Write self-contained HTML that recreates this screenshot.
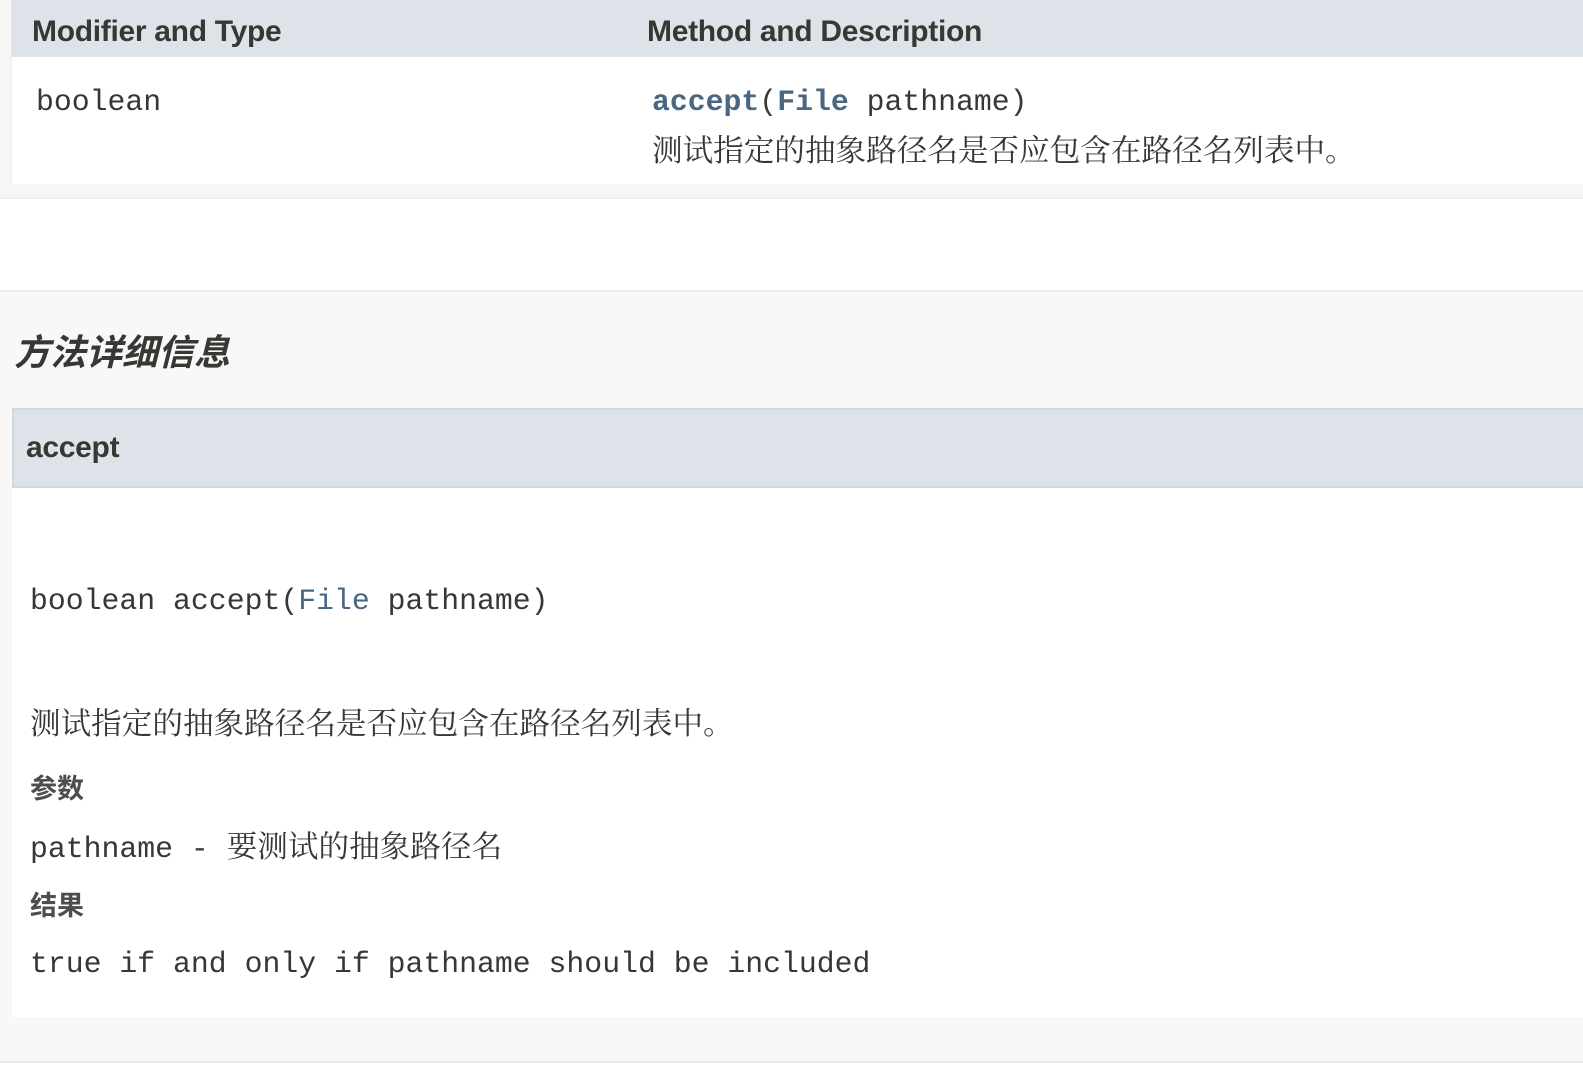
<!DOCTYPE html>
<html><head><meta charset="utf-8"><style>
html,body{margin:0;padding:0;width:1583px;height:1078px;overflow:hidden;background:#fff;}
.a{position:absolute;white-space:nowrap;}
.mono{font-family:"Liberation Mono","Noto Serif CJK SC",monospace;font-size:29.8px;color:#353833;}
.cjk{font-family:"Liberation Serif","Noto Serif CJK SC",serif;font-size:30.6px;color:#353833;}
.sans{font-family:"Liberation Sans","Noto Sans CJK SC",sans-serif;font-weight:bold;color:#353833;}
</style></head><body>
<div class="a" style="left:0;top:0;width:1583px;height:197px;background:#f6f6f6"></div>
<div class="a" style="left:11px;top:0;width:1572px;height:184px;background:#fff;border-left:1px solid #eee"></div>
<div class="a" style="left:11px;top:0;width:1572px;height:57px;background:#dee3e9"></div>
<div class="a" style="left:0;top:197px;width:1583px;height:2px;background:#eee"></div>
<div class="a sans" style="left:32px;top:15px;font-size:30px;letter-spacing:-0.3px">Modifier and Type</div>
<div class="a sans" style="left:647px;top:15px;font-size:30px;letter-spacing:-0.3px">Method and Description</div>
<div class="a mono" style="left:36px;top:85px">boolean</div>
<div class="a mono" style="left:652px;top:85px"><b style="color:#4a6782">accept</b>(<b style="color:#4a6782">File</b> pathname)</div>
<div class="a cjk" style="left:652px;top:126px">测试指定的抽象路径名是否应包含在路径名列表中。</div>
<div class="a" style="left:0;top:290px;width:1583px;height:2px;background:#ececec"></div>
<div class="a" style="left:0;top:292px;width:1583px;height:769px;background:#f8f8f8"></div>
<div class="a" style="left:0;top:1061px;width:1583px;height:2px;background:#ececec"></div>
<div class="a sans" style="left:14px;top:324px;font-size:36px;font-style:italic;">方法详细信息</div>
<div class="a" style="left:12px;top:408px;width:1571px;height:80px;background:#dee3e9;border-top:2px solid #d0d9e0;border-bottom:2px solid #d0d9e0;border-left:2px solid #d0d9e0;box-sizing:border-box"></div>
<div class="a" style="left:12px;top:488px;width:1571px;height:529px;background:#fff"></div>
<div class="a sans" style="left:26px;top:431px;font-size:30px;letter-spacing:-0.3px">accept</div>
<div class="a mono" style="left:30px;top:584px">boolean accept(<span style="color:#4a6782">File</span> pathname)</div>
<div class="a cjk" style="left:30px;top:699px">测试指定的抽象路径名是否应包含在路径名列表中。</div>
<div class="a sans" style="left:30px;top:767px;font-size:27px;color:#4d4d4d">参数</div>
<div class="a mono" style="left:30px;top:822px">pathname - <span style="font-family:'Liberation Serif','Noto Serif CJK SC',serif;font-size:30.6px">要测试的抽象路径名</span></div>
<div class="a sans" style="left:30px;top:884px;font-size:27px;color:#4d4d4d">结果</div>
<div class="a mono" style="left:30px;top:947px">true if and only if pathname should be included</div>
</body></html>
